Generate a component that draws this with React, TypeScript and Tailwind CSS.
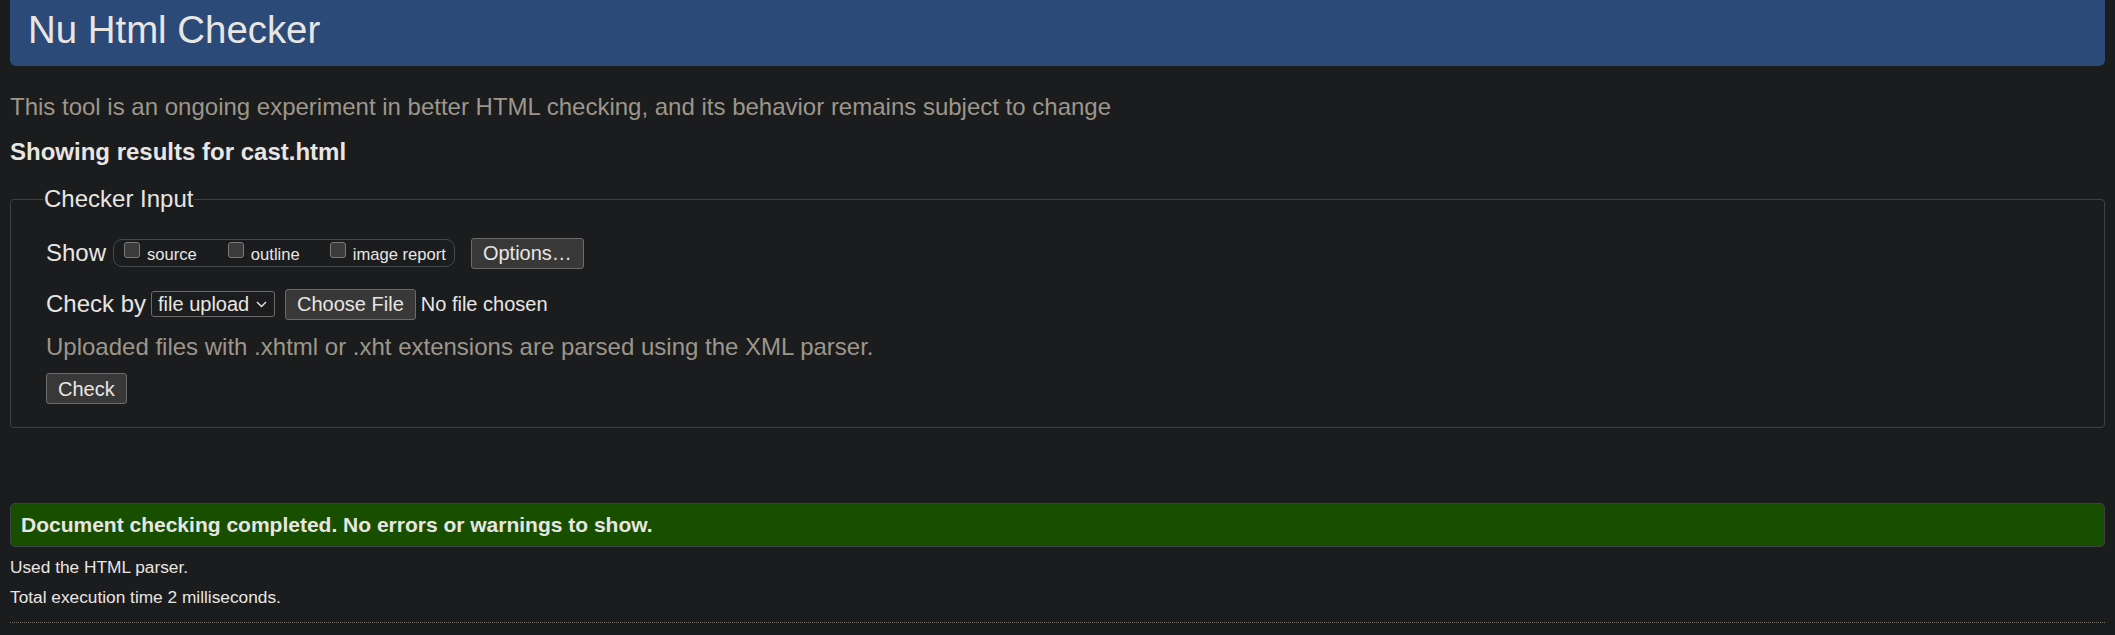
import React from "react";

function Checkbox() {
  return (
    <span className="mb-[6px] inline-block h-[16px] w-[16px] shrink-0 rounded-[3px] border border-[#7a7a7a] bg-[#3b3b3b]" />
  );
}

function Btn({ children }: { children: React.ReactNode }) {
  return (
    <span className="flex h-[31px] items-center rounded-[3px] border border-[#6b6b6b] bg-[#383838] px-[11px] text-[20px] leading-[24px] text-[#e8e6e3]">
      {children}
    </span>
  );
}

export default function App() {
  return (
    <div className="min-h-[635px] bg-[#1b1c1e] px-[10px] font-['Liberation_Sans',Arial,sans-serif] text-[#e8e6e3]">
      <header className="h-[66px] rounded-b-[6px] bg-[#2c4a77] pl-[18px] pt-[8px]">
        <h1 className="text-[38.4px] font-normal leading-[44px] text-[#e8e6e3]">Nu Html Checker</h1>
      </header>

      <p className="mt-[27px] text-[24px] leading-[28px] text-[#9d968a]">
        This tool is an ongoing experiment in better HTML checking, and its behavior remains subject to change
      </p>
      <p className="mt-[17px] text-[24px] font-bold leading-[28px]">Showing results for cast.html</p>

      <fieldset className="mt-[19px] rounded-[4px] border border-[#3e4244] pb-[23px] pl-[35px] pr-[35px] pt-[24px]">
        <legend className="-ml-[3px] px-[1px] text-[24px] leading-[28px]">Checker Input</legend>

        <div className="flex h-[32px] items-center">
          <span className="text-[24px] leading-[28px]">Show</span>
          <div className="ml-[7px] flex h-[28px] items-center rounded-[9px] border border-[#44494b] pl-[10px] pr-[8px]">
            <Checkbox />
            <span className="ml-[7px] mt-[3px] text-[16.6px] leading-[16px]">source</span>
            <span className="ml-[31px] flex items-center">
              <Checkbox />
            </span>
            <span className="ml-[7px] mt-[3px] text-[16.6px] leading-[16px]">outline</span>
            <span className="ml-[30px] flex items-center">
              <Checkbox />
            </span>
            <span className="ml-[7px] mt-[3px] text-[16.6px] leading-[16px]">image report</span>
          </div>
          <span className="ml-[16px]">
            <Btn>Options…</Btn>
          </span>
        </div>

        <div className="mt-[19px] flex h-[32px] items-center">
          <span className="text-[24px] leading-[28px]">Check by</span>
          <span className="ml-[5px] flex h-[26px] w-[124px] items-center rounded-[3px] border border-[#6b6b6b] bg-[#1b1c1e] pl-[6px] text-[20px] leading-[24px]">
            file upload
            <svg className="ml-[7px] mt-[1px]" width="11" height="7" viewBox="0 0 11 7" fill="none">
              <path d="M1 1l4.5 4.5L10 1" stroke="#e8e6e3" strokeWidth="1.4" />
            </svg>
          </span>
          <span className="ml-[10px]">
            <Btn>Choose File</Btn>
          </span>
          <span className="ml-[5px] text-[20px] leading-[24px]">No file chosen</span>
        </div>

        <p className="mt-[13px] text-[24px] leading-[28px] text-[#9d968a]">
          Uploaded files with .xhtml or .xht extensions are parsed using the XML parser.
        </p>

        <div className="mt-[12px] flex">
          <Btn>Check</Btn>
        </div>
      </fieldset>

      <div className="mt-[75px] flex h-[44px] items-center rounded-[5px] border border-[#3e4244] bg-[#174e00] pl-[10px]">
        <span className="text-[21px] font-bold leading-[24px]">
          Document checking completed. No errors or warnings to show.
        </span>
      </div>

      <p className="mt-[10px] text-[17.3px] leading-[20px]">Used the HTML parser.</p>
      <p className="mt-[10px] text-[17.3px] leading-[20px]">Total execution time 2 milliseconds.</p>
      <div className="mt-[15px] border-t border-dotted border-[#6f6a60]" />
    </div>
  );
}
